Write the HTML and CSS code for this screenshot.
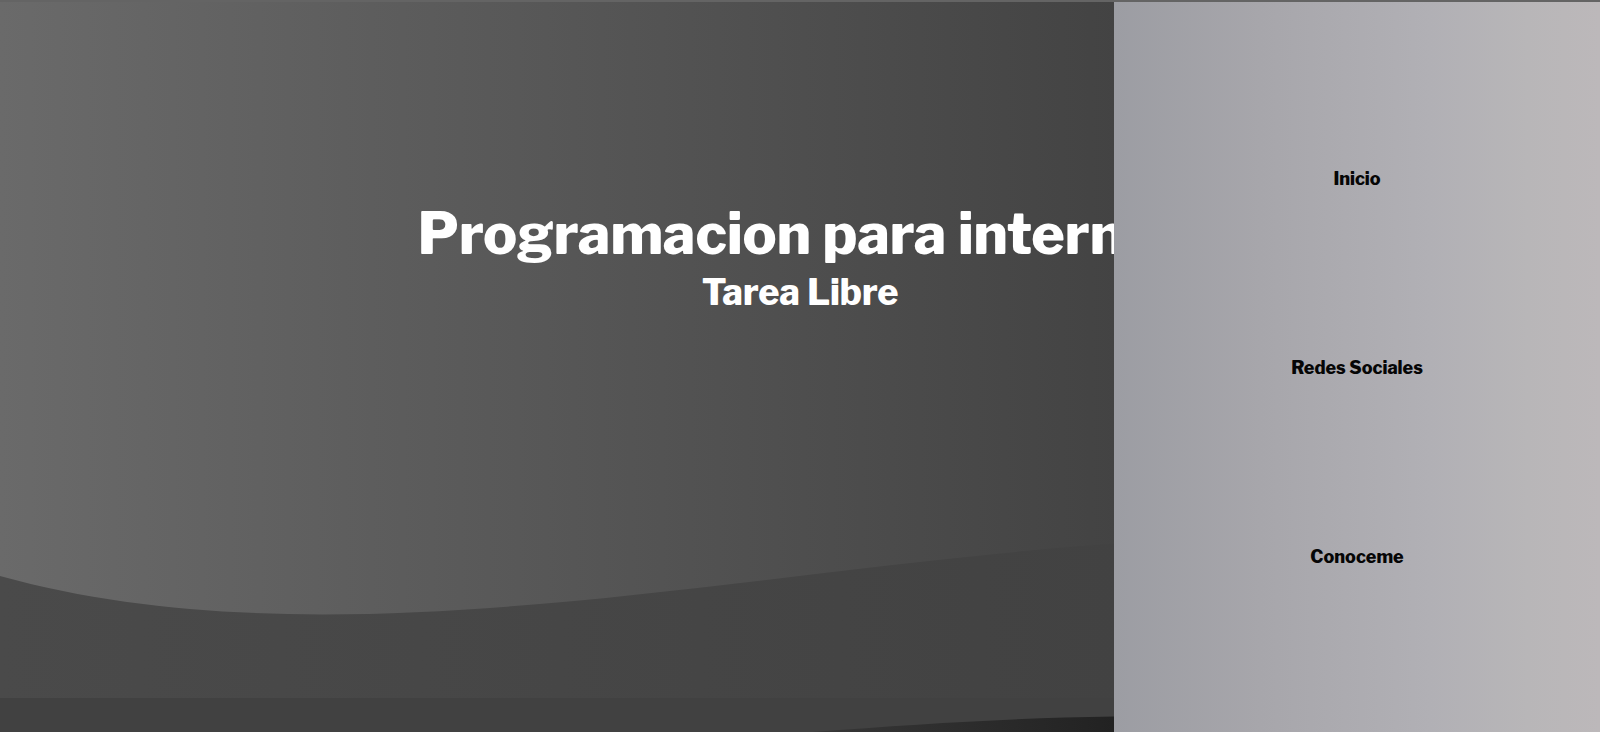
FILE: index.html
```html
<!DOCTYPE html>
<html lang="es">
<head>
<meta charset="utf-8">
<meta name="viewport" content="width=device-width, initial-scale=1">
<title>Programacion para internet</title>
<link rel="stylesheet" href="styles.css">
</head>
<body>
<header class="hero">
  <div class="hero-text">
    <h1 class="title">Programacion para internet</h1>
    <h2 class="subtitle">Tarea Libre</h2>
  </div>
  <svg class="hero-wave" viewBox="0 0 1600 188" preserveAspectRatio="none" aria-hidden="true">
    <defs>
      <linearGradient id="wave-fill" x1="0" x2="1" y1="0" y2="0">
        <stop offset="0" stop-color="#4a4a4a"/>
        <stop offset="0.7" stop-color="#424242"/>
        <stop offset="1" stop-color="#404040"/>
      </linearGradient>
    </defs>
    <path fill="url(#wave-fill)" d="M0 66C480 199 1117 -67 1600 66V188H0Z"/>
  </svg>
</header>
<main class="section">
  <svg class="section-wave" viewBox="0 0 1600 34" preserveAspectRatio="none" aria-hidden="true">
    <defs>
      <linearGradient id="dark-fill" gradientUnits="userSpaceOnUse" x1="800" x2="1114" y1="0" y2="0">
        <stop offset="0" stop-color="#383838"/>
        <stop offset="1" stop-color="#222222"/>
      </linearGradient>
    </defs>
    <path fill="url(#dark-fill)" d="M812 34C920 26 1010 20 1114 18.500C1260 16 1440 20 1600 34Z"/>
  </svg>
</main>
<nav class="menu" aria-label="Principal">
  <a class="menu-link" href="#inicio">Inicio</a>
  <a class="menu-link" href="#redes">Redes Sociales</a>
  <a class="menu-link" href="#conoceme">Conoceme</a>
</nav>
</body>
</html>
```
FILE: styles.css
```css
* {
  box-sizing: border-box;
  margin: 0;
}

body {
  height: 100vh;
  display: flex;
  flex-direction: column;
  overflow: hidden;
  border-top: 2px solid #646464;
  background: #414141;
  font-family: "Libre Franklin", "Franklin Gothic Medium", "Liberation Sans", Arial, sans-serif;
}

.hero {
  flex: 1;
  display: flex;
  flex-direction: column;
  justify-content: space-between;
  background: linear-gradient(to right, #6a6a6a 0%, #434343 70%, #3e3e3e 100%);
}

.hero-text {
  padding-top: 198px;
  color: #fff;
  text-align: center;
}

.title {
  font-size: 57px;
  font-weight: 800;
  line-height: 68px;
}

.subtitle {
  font-size: 36px;
  font-weight: 800;
  line-height: 48px;
}

.hero-wave {
  display: block;
  width: 100%;
  height: 188px;
}

.section {
  height: 34px;
}

.section-wave {
  display: block;
  width: 100%;
  height: 100%;
}

.menu {
  position: fixed;
  top: 2px;
  right: 0;
  bottom: 0;
  width: calc(30% + 6px);
  display: flex;
  flex-direction: column;
  align-items: center;
  justify-content: space-evenly;
  background: linear-gradient(to right, #9c9da3 0%, #a7a6ab 30%, #b1b0b5 65%, #b8b6b8 85%, #bcb8ba 100%);
}

.menu-link {
  padding-top: 2px;
  color: #060606;
  font-size: 18px;
  font-weight: 800;
  line-height: 24px;
  text-decoration: none;
}
```
